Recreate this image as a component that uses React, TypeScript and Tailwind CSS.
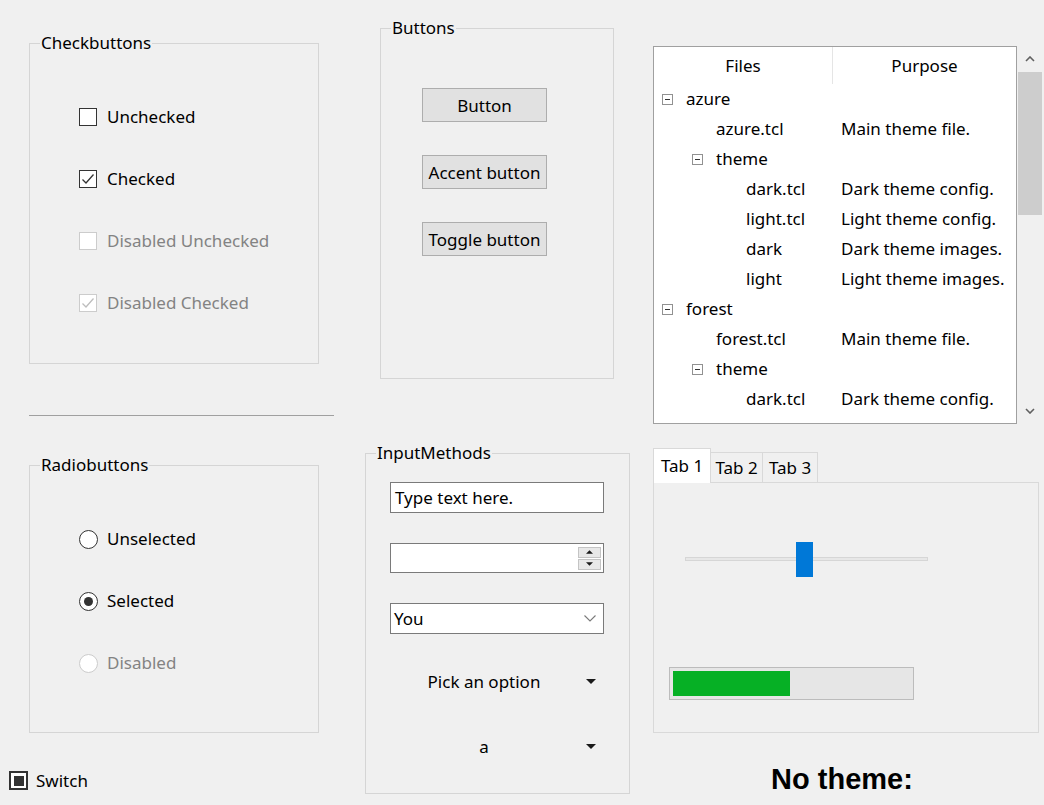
import React from "react";
import clsx from "clsx";

const TREE_ROWS = [
  { level: 0, open: true, name: "azure", purpose: "" },
  { level: 1, open: false, name: "azure.tcl", purpose: "Main theme file." },
  { level: 1, open: true, name: "theme", purpose: "" },
  { level: 2, open: false, name: "dark.tcl", purpose: "Dark theme config." },
  { level: 2, open: false, name: "light.tcl", purpose: "Light theme config." },
  { level: 2, open: false, name: "dark", purpose: "Dark theme images." },
  { level: 2, open: false, name: "light", purpose: "Light theme images." },
  { level: 0, open: true, name: "forest", purpose: "" },
  { level: 1, open: false, name: "forest.tcl", purpose: "Main theme file." },
  { level: 1, open: true, name: "theme", purpose: "" },
  { level: 2, open: false, name: "dark.tcl", purpose: "Dark theme config." },
];

const INDENT = ["ml-0", "ml-[30px]", "ml-[60px]"];

function Frame({
  label,
  className,
  children,
}: {
  label: string;
  className?: string;
  children?: React.ReactNode;
}) {
  return (
    <div className={clsx("relative border border-[#d5d5d5]", className)}>
      <span className="absolute left-[10px] top-[-12px] bg-[#f0f0f0] px-px leading-[22px]">
        {label}
      </span>
      {children}
    </div>
  );
}

function Check({
  label,
  checked,
  disabled,
}: {
  label: string;
  checked?: boolean;
  disabled?: boolean;
}) {
  return (
    <div className="flex h-[62px] items-center gap-[10px]">
      <span
        className={clsx(
          "flex h-[18px] w-[18px] items-center justify-center border bg-white",
          disabled ? "border-[#cccccc]" : "border-[#333333]"
        )}
      >
        {checked && (
          <svg viewBox="0 0 16 16" className="h-[16px] w-[16px]">
            <path
              d="M2.5 8.5 L6 12 L13.5 3.5"
              fill="none"
              stroke={disabled ? "#bdbdbd" : "#333333"}
              strokeWidth="1.3"
            />
          </svg>
        )}
      </span>
      <span className={disabled ? "text-[#838383]" : "text-black"}>{label}</span>
    </div>
  );
}

function Radio({
  label,
  selected,
  disabled,
}: {
  label: string;
  selected?: boolean;
  disabled?: boolean;
}) {
  return (
    <div className="flex h-[62px] items-center gap-[9px]">
      <span
        className={clsx(
          "flex h-[19px] w-[19px] items-center justify-center rounded-full border bg-white",
          disabled ? "border-[#cccccc]" : "border-[#333333]"
        )}
      >
        {selected && <span className="h-[9px] w-[9px] rounded-full bg-[#333333]" />}
      </span>
      <span className={disabled ? "text-[#838383]" : "text-black"}>{label}</span>
    </div>
  );
}

function Minus() {
  return (
    <span className="flex h-[11px] w-[11px] items-center justify-center border border-[#919191] bg-white">
      <span className="h-px w-[5px] bg-[#333333]" />
    </span>
  );
}

function Chevron({ up }: { up?: boolean }) {
  return (
    <svg viewBox="0 0 10 6" className="h-[6px] w-[10px]">
      <path
        d={up ? "M1 5 L5 1 L9 5" : "M1 1 L5 5 L9 1"}
        fill="none"
        stroke="#606060"
        strokeWidth="1.6"
      />
    </svg>
  );
}

function Triangle({ up, small }: { up?: boolean; small?: boolean }) {
  return (
    <svg viewBox="0 0 10 5" className={small ? "h-[4px] w-[7px]" : "h-[5px] w-[10px]"}>
      <path d={up ? "M0 5 L5 0 L10 5 Z" : "M0 0 L10 0 L5 5 Z"} fill="#1a1a1a" />
    </svg>
  );
}

function OptionMenu({ value }: { value: string }) {
  return (
    <div className="flex h-[31px] w-[214px] items-center">
      <span className="flex-1 text-center">{value}</span>
      <span className="ml-[8px] mr-[8px] flex">
        <Triangle />
      </span>
    </div>
  );
}

export default function App() {
  return (
    <div className="flex h-[805px] w-[1044px] overflow-hidden bg-[#f0f0f0] font-['Noto_Sans',sans-serif] text-[17px] text-black">
      {/* left column */}
      <div className="flex w-[345px] flex-col">
        <Frame label="Checkbuttons" className="ml-[29px] mt-[43px] h-[321px] w-[290px]">
          <div className="flex flex-col pl-[49px] pt-[42px]">
            <Check label="Unchecked" />
            <Check label="Checked" checked />
            <Check label="Disabled Unchecked" disabled />
            <Check label="Disabled Checked" checked disabled />
          </div>
        </Frame>
        <div className="ml-[29px] mt-[51px] h-px w-[305px] bg-[#a0a0a0]" />
        <Frame label="Radiobuttons" className="ml-[29px] mt-[49px] h-[268px] w-[290px]">
          <div className="flex flex-col pl-[49px] pt-[42px]">
            <Radio label="Unselected" />
            <Radio label="Selected" selected />
            <Radio label="Disabled" disabled />
          </div>
        </Frame>
        <div className="ml-[9px] mt-[35px] flex items-center gap-[8px]">
          <span className="flex h-[19px] w-[19px] items-center justify-center border-2 border-[#333333] bg-white">
            <span className="h-[10px] w-[10px] bg-[#333333]" />
          </span>
          <span>Switch</span>
        </div>
      </div>

      {/* middle column */}
      <div className="flex w-[308px] flex-col">
        <Frame label="Buttons" className="ml-[35px] mt-[28px] h-[351px] w-[234px]">
          <div className="flex flex-col gap-[33px] pl-[41px] pt-[59px]">
            {["Button", "Accent button", "Toggle button"].map((b) => (
              <button
                key={b}
                className="h-[34px] w-[125px] border border-[#adadad] bg-[#e1e1e1] pt-px text-black"
              >
                {b}
              </button>
            ))}
          </div>
        </Frame>
        <Frame label="InputMethods" className="ml-[20px] mt-[74px] h-[341px] w-[265px]">
          <div className="flex flex-col pl-[24px] pt-[28px]">
            <div className="flex h-[31px] w-[214px] items-center border border-[#7a7a7a] bg-white pl-[4px]">
              Type text here.
            </div>
            <div className="mt-[30px] flex h-[30px] w-[214px] items-center justify-end border border-[#7a7a7a] bg-white pr-[2px]">
              <div className="flex flex-col gap-px">
                <span className="flex h-[11px] w-[23px] items-center justify-center border border-[#c4c4c4] bg-[#e8e8e8]">
                  <Triangle up small />
                </span>
                <span className="flex h-[11px] w-[23px] items-center justify-center border border-[#c4c4c4] bg-[#e8e8e8]">
                  <Triangle small />
                </span>
              </div>
            </div>
            <div className="mt-[30px] flex h-[31px] w-[214px] items-center justify-between border border-[#7a7a7a] bg-white pl-[3px] pr-[7px]">
              <span>You</span>
              <svg viewBox="0 0 12 7" className="h-[7px] w-[12px]">
                <path d="M0.5 0.5 L6 6 L11.5 0.5" fill="none" stroke="#7a7a7a" strokeWidth="1.1" />
              </svg>
            </div>
            <div className="mt-[32px]">
              <OptionMenu value="Pick an option" />
            </div>
            <div className="mt-[34px]">
              <OptionMenu value="a" />
            </div>
          </div>
        </Frame>
      </div>

      {/* right column */}
      <div className="flex w-[391px] flex-col">
        <div className="mt-[46px] flex h-[378px]">
          <div className="flex w-[364px] flex-col overflow-hidden border border-[#a0a0a0] bg-white">
            <div className="flex h-[37px] shrink-0">
              <div className="flex w-[179px] items-center justify-center border-r border-[#e5e5e5]">
                Files
              </div>
              <div className="flex flex-1 items-center justify-center">Purpose</div>
            </div>
            {TREE_ROWS.map((r, i) => (
              <div key={i} className="flex h-[30px] shrink-0 items-center">
                <div className="flex w-[179px] items-center">
                  <div className={clsx("flex items-center", INDENT[r.level])}>
                    <span className="flex w-[32px] pl-[8px]">{r.open && <Minus />}</span>
                    <span>{r.name}</span>
                  </div>
                </div>
                <div className="pl-[8px]">{r.purpose}</div>
              </div>
            ))}
          </div>
          <div className="flex w-[26px] flex-col">
            <div className="flex h-[26px] items-center justify-center">
              <Chevron up />
            </div>
            <div className="flex-1 px-px">
              <div className="h-[143px] bg-[#cdcdcd]" />
            </div>
            <div className="flex h-[26px] items-center justify-center">
              <Chevron />
            </div>
          </div>
        </div>

        <div className="mt-[24px] flex w-[386px] flex-col">
          <div className="flex h-[34px] items-end">
            <div className="z-10 -mb-px flex h-[35px] w-[58px] items-center justify-center border border-b-0 border-[#d9d9d9] bg-white">
              Tab 1
            </div>
            <div className="flex h-[30px] w-[52px] items-center justify-center border border-l-0 border-b-0 border-[#d9d9d9]">
              Tab 2
            </div>
            <div className="flex h-[30px] w-[55px] items-center justify-center border border-l-0 border-b-0 border-[#d9d9d9]">
              Tab 3
            </div>
          </div>
          <div className="flex h-[251px] flex-col border border-[#d9d9d9]">
            <div className="relative ml-[31px] mt-[59px] h-[35px] w-[243px]">
              <div className="absolute left-0 right-0 top-[15px] h-[4px] border border-[#d6d6d6] bg-[#e7e7e7]" />
              <div className="absolute left-[111px] top-0 h-[35px] w-[17px] bg-[#0078d7]" />
            </div>
            <div className="ml-[15px] mt-[90px] flex h-[33px] w-[245px] items-stretch border border-[#bcbcbc] bg-[#e6e6e6] p-[3px]">
              <div className="w-[117px] bg-[#06b025]" />
            </div>
          </div>
          <div className="mt-[30px] pr-[8px] text-center font-['Liberation_Sans',Arial,sans-serif] text-[29px] font-bold leading-[33px]">
            No theme:
          </div>
        </div>
      </div>
    </div>
  );
}
